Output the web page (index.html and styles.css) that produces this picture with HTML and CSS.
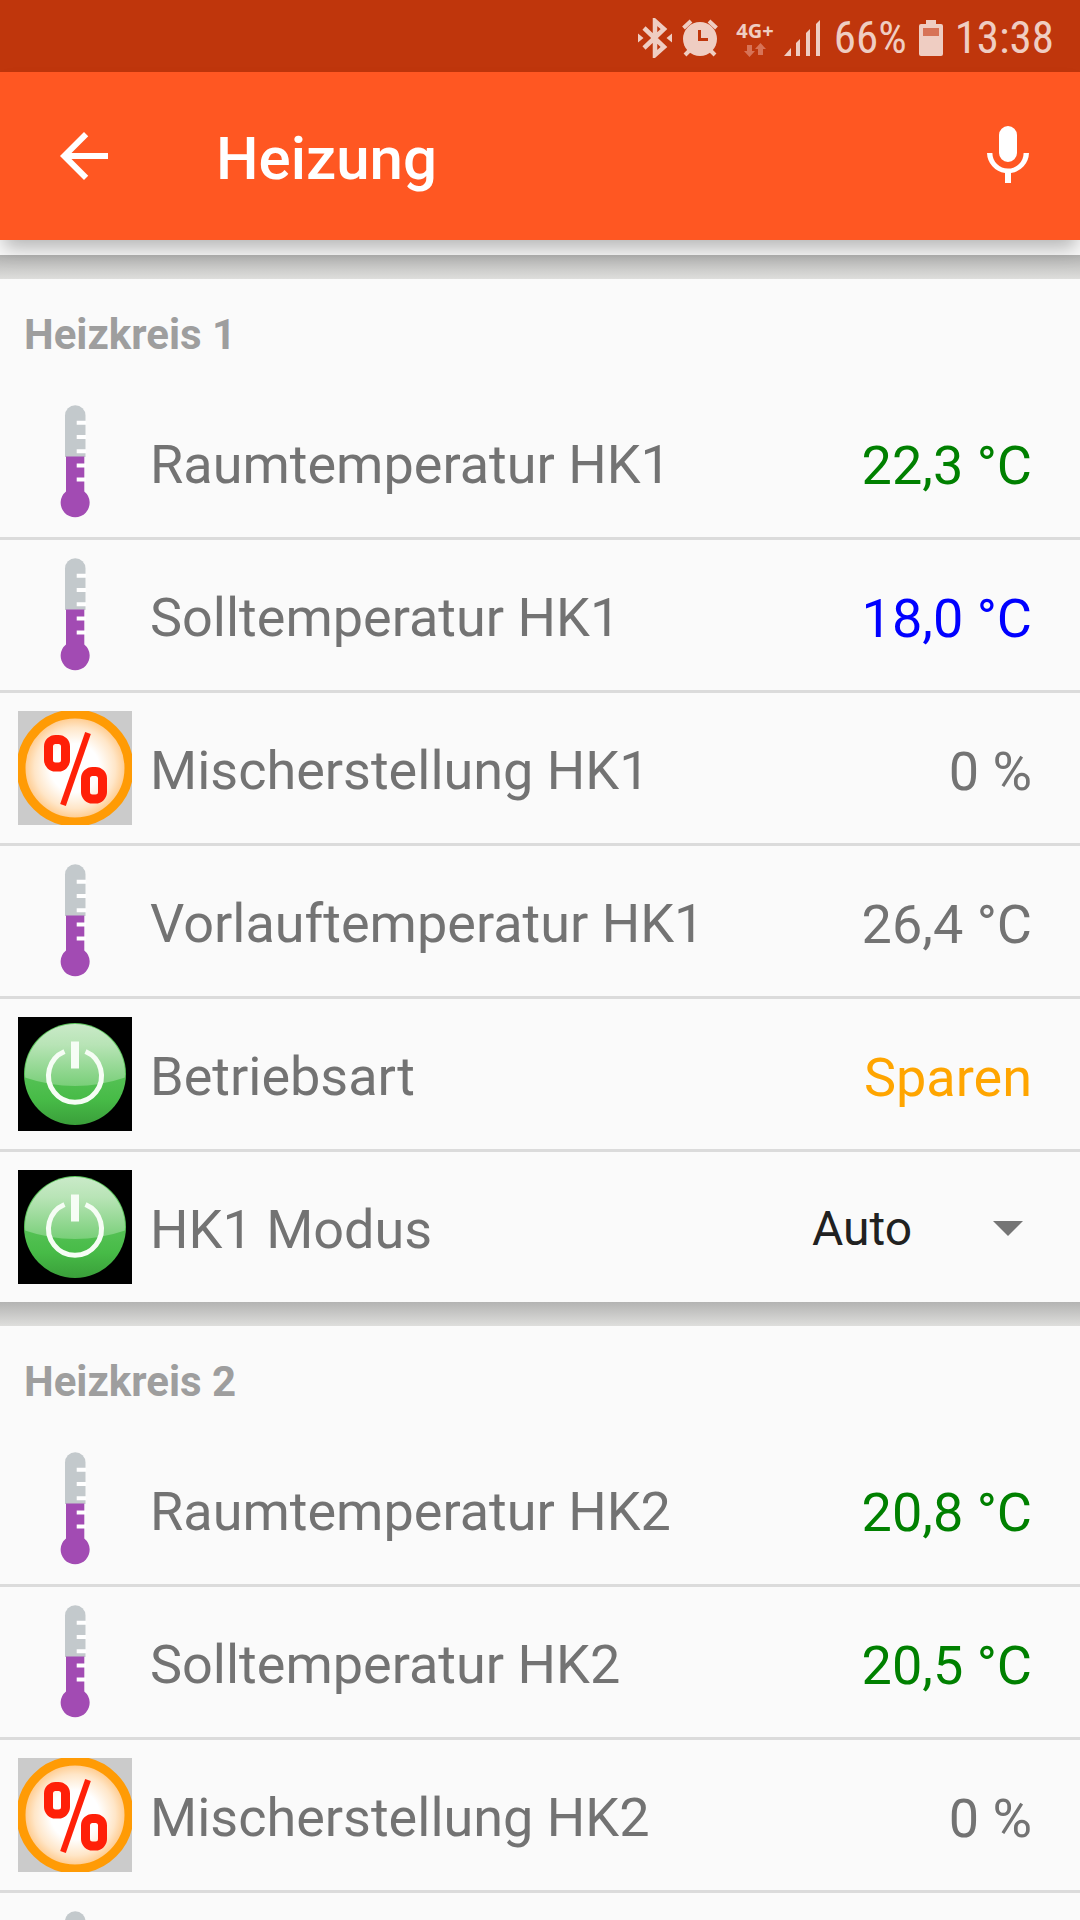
FILE: index.html
```html
<!DOCTYPE html>
<html lang="de">
<head>
<meta charset="utf-8">
<meta name="viewport" content="width=device-width, initial-scale=1">
<title>Heizung</title>
<link rel="stylesheet" href="styles.css">
</head>
<body>
<svg class="sprite" width="0" height="0" aria-hidden="true">
  <defs>
    <radialGradient id="glow">
      <stop offset="0.45" stop-color="#ffffff"/>
      <stop offset="0.75" stop-color="#ffe6c8"/>
      <stop offset="1" stop-color="#ffc27a"/>
    </radialGradient>
    <linearGradient id="gloss" x1="0" y1="0" x2="0" y2="1">
      <stop offset="0" stop-color="#d0eccf"/>
      <stop offset="0.4" stop-color="#b8e4b6"/>
      <stop offset="1" stop-color="#79cf79"/>
    </linearGradient>
    <linearGradient id="green" x1="0" y1="0" x2="0" y2="1">
      <stop offset="0.4" stop-color="#5cc55c"/>
      <stop offset="0.75" stop-color="#47bb47"/>
      <stop offset="1" stop-color="#3a9f3a"/>
    </linearGradient>
    <clipPath id="disc"><circle cx="57" cy="57" r="50"/></clipPath>
  </defs>
  <symbol id="thermometer" viewBox="0 0 114 114">
    <path fill="#c3c9cc" d="M47 10.500a10.250 10.250 0 0 1 20.500 0v41.500H47z"/>
    <path fill="#a24bb3" d="M48 51.500h18.300v35a14.500 14.500 0 1 1-18.300 0z"/>
    <path stroke="#fff" stroke-width="4" d="M58.700 17.700H68M58.700 32H68M58.700 46.200H68M58.700 60.400H68M58.700 74.600H68"/>
  </symbol>
  <symbol id="percent" viewBox="0 0 114 114">
    <path fill="#cbcbcb" d="M0 0h114v114H0z"/>
    <circle cx="57" cy="57" r="54" fill="url(#glow)" stroke="#ff9b05" stroke-width="9"/>
    <g fill="none" stroke="#ff2008" stroke-width="9">
      <rect x="30.500" y="28.500" width="17" height="27.500" rx="7"/>
      <rect x="67.500" y="60.500" width="17" height="27.500" rx="7"/>
      <path stroke-width="6" d="M70 22L45 94"/>
    </g>
  </symbol>
  <symbol id="power" viewBox="0 0 114 114">
    <path d="M0 0h114v114H0z"/>
    <circle cx="57" cy="57" r="51" fill="url(#green)"/>
    <path clip-path="url(#disc)" fill="url(#gloss)" d="M0 0h114v58Q86 69 57 69T0 58z"/>
    <g fill="none" stroke="#f6fdf5">
      <path stroke-width="5" d="M46.500 34.500a26.500 26.500 0 1 0 21 0"/>
      <path stroke-width="8" d="M57 24.500v27"/>
    </g>
  </symbol>
</svg>

<div class="status-bar">
  <svg class="bluetooth" width="34" height="40" viewBox="0 0 34 40" aria-hidden="true">
    <path fill="none" stroke="currentColor" stroke-width="4.500" d="M6 10l20 19-9 8V3l9 8L6 30"/>
    <path fill="currentColor" d="M0 15.500l5.500 4.500L0 24.500zM34 15.500L28.500 20l5.500 4.500z"/>
  </svg>
  <svg class="alarm" width="36" height="38" viewBox="0 0 36 38" aria-hidden="true">
    <circle cx="18" cy="20" r="17" fill="currentColor"/>
    <path stroke="currentColor" stroke-width="4" d="M1.500 9L9 2M34.500 9L27 2M8 31l-5 5M28 31l5 5"/>
    <path fill="none" stroke="#bf360c" stroke-width="3" d="M17.500 11v9.500H26"/>
  </svg>
  <span class="network">
    <span>4G+</span>
    <svg width="22" height="14" viewBox="0 0 22 14" aria-hidden="true"><path fill="#d77357" d="M3 2h5v6h3l-5.500 6L0 8h3zM14 12h5V6h3l-5.500-6L11 6h3z"/></svg>
  </span>
  <svg class="signal" width="36" height="36" viewBox="0 0 36 36" aria-hidden="true">
    <path fill="currentColor" d="M0 36l7-8v8zM12 36V23l4-4v17zM22 36V13l4-4v27zM32 36V4l4-4v36z"/>
  </svg>
  <span class="charge">66%</span>
  <svg class="battery" width="24" height="36" viewBox="0 0 24 36" aria-hidden="true">
    <path fill="currentColor" d="M7 0h10v4h5a2 2 0 0 1 2 2v28a2 2 0 0 1-2 2H2a2 2 0 0 1-2-2V6a2 2 0 0 1 2-2h5z"/>
    <path fill="#d77357" d="M4 8h16v8H4z"/>
  </svg>
  <time>13:38</time>
</div>

<header class="app-bar">
  <button class="icon-button" type="button" aria-label="Zurück">
    <svg width="72" height="72" viewBox="0 0 24 24" aria-hidden="true"><path fill="currentColor" d="M20 11H7.830l5.590-5.590L12 4l-8 8 8 8 1.410-1.410L7.830 13H20v-2z"/></svg>
  </button>
  <h1>Heizung</h1>
  <button class="icon-button" type="button" aria-label="Spracheingabe">
    <svg width="72" height="72" viewBox="0 0 24 24" aria-hidden="true"><path fill="currentColor" d="M12 14a3 3 0 0 0 3-3V5a3 3 0 0 0-6 0v6a3 3 0 0 0 3 3zm5.200-3a5.200 5.200 0 0 1-10.400 0H5a7 7 0 0 0 6 6.700V21h2v-3.300a7 7 0 0 0 6-6.700z"/></svg>
  </button>
</header>

<main>
  <section>
    <h2>Heizkreis 1</h2>
    <ul>
      <li><svg class="icon"><use href="#thermometer"/></svg><span class="label">Raumtemperatur HK1</span><span class="value green">22,3 °C</span></li>
      <li><svg class="icon"><use href="#thermometer"/></svg><span class="label">Solltemperatur HK1</span><span class="value blue">18,0 °C</span></li>
      <li><svg class="icon"><use href="#percent"/></svg><span class="label">Mischerstellung HK1</span><span class="value">0 %</span></li>
      <li><svg class="icon"><use href="#thermometer"/></svg><span class="label">Vorlauftemperatur HK1</span><span class="value">26,4 °C</span></li>
      <li><svg class="icon"><use href="#power"/></svg><span class="label">Betriebsart</span><span class="value orange">Sparen</span></li>
      <li>
        <svg class="icon"><use href="#power"/></svg>
        <label class="label" for="hk1-mode">HK1 Modus</label>
        <span class="dropdown">
          <select id="hk1-mode"><option>Auto</option></select>
          <svg width="30" height="15" viewBox="0 0 30 15" aria-hidden="true"><path fill="#757575" d="M0 0h30L15 15z"/></svg>
        </span>
      </li>
    </ul>
  </section>
  <section>
    <h2>Heizkreis 2</h2>
    <ul>
      <li><svg class="icon"><use href="#thermometer"/></svg><span class="label">Raumtemperatur HK2</span><span class="value green">20,8 °C</span></li>
      <li><svg class="icon"><use href="#thermometer"/></svg><span class="label">Solltemperatur HK2</span><span class="value green">20,5 °C</span></li>
      <li><svg class="icon"><use href="#percent"/></svg><span class="label">Mischerstellung HK2</span><span class="value">0 %</span></li>
      <li><svg class="icon"><use href="#thermometer"/></svg></li>
    </ul>
  </section>
</main>
</body>
</html>
```
FILE: styles.css
```css
* {
  box-sizing: border-box;
}

body {
  margin: 0;
  height: 100vh;
  display: flex;
  flex-direction: column;
  overflow: hidden;
  background: #fafafa;
  color: #737373;
  font-family: Roboto, sans-serif;
}

.sprite {
  position: absolute;
}

.status-bar {
  flex: none;
  display: flex;
  justify-content: flex-end;
  align-items: center;
  height: 72px;
  padding: 3px 26px 0 0;
  background: #bf360c;
  color: #efcdc2;
  font-family: "Roboto Condensed", "Liberation Sans Narrow", Roboto, sans-serif;
  font-size: 45px;
}

.alarm {
  margin-left: 10px;
}

.network {
  display: flex;
  flex-direction: column;
  align-items: center;
  margin-left: 18px;
  font: 700 20px/24px "Open Sans", sans-serif;
}

.signal {
  margin-left: 10px;
}

.charge {
  margin-left: 14px;
}

.battery {
  margin: 0 12px;
}

.app-bar {
  position: relative;
  z-index: 1;
  flex: none;
  display: flex;
  align-items: center;
  height: 168px;
  padding: 0 36px 0 48px;
  background: #ff5722;
  color: #fff;
  box-shadow: 0 12px 18px -4px rgba(0, 0, 0, 0.28);
}

.app-bar h1 {
  flex: 1;
  margin: 0;
  padding: 4px 0 0 96px;
  font-size: 60px;
  font-weight: 500;
}

.icon-button {
  display: flex;
  padding: 0;
  border: 0;
  background: none;
  color: inherit;
}

main {
  flex: 1;
  min-height: 0;
  padding-top: 15px;
  overflow: auto;
  scrollbar-width: none;
}

section::before {
  content: "";
  display: block;
  height: 24px;
  background: linear-gradient(#b3b3b2, #dededc);
}

h2 {
  display: flex;
  align-items: center;
  height: 108px;
  margin: 0;
  padding: 2px 24px 0;
  color: #9e9e9e;
  font-size: 42px;
  font-weight: 700;
}

ul {
  margin: 0;
  padding: 0;
  list-style: none;
}

li {
  display: flex;
  align-items: center;
  min-height: 150px;
  padding: 0 48px 0 18px;
  font-size: 54px;
}

li + li {
  border-top: 3px solid #dbdbdb;
  min-height: 153px;
}

.icon {
  flex: none;
  width: 114px;
  height: 114px;
  margin-right: 18px;
}

.label {
  flex: 1;
  padding-top: 4px;
}

.value {
  padding-top: 6px;
}

.green {
  color: #008000;
}

.blue {
  color: #0000ff;
}

.orange {
  color: #ffa500;
}

.dropdown {
  display: grid;
  align-items: center;
  width: 220px;
  padding-top: 2px;
}

.dropdown select,
.dropdown svg {
  grid-area: 1 / 1;
}

.dropdown svg {
  justify-self: end;
  margin-right: 9px;
  pointer-events: none;
}

.dropdown select {
  appearance: none;
  width: 100%;
  padding: 0;
  border: 0;
  background: none;
  color: #212121;
  font: inherit;
  font-size: 48px;
}
```
